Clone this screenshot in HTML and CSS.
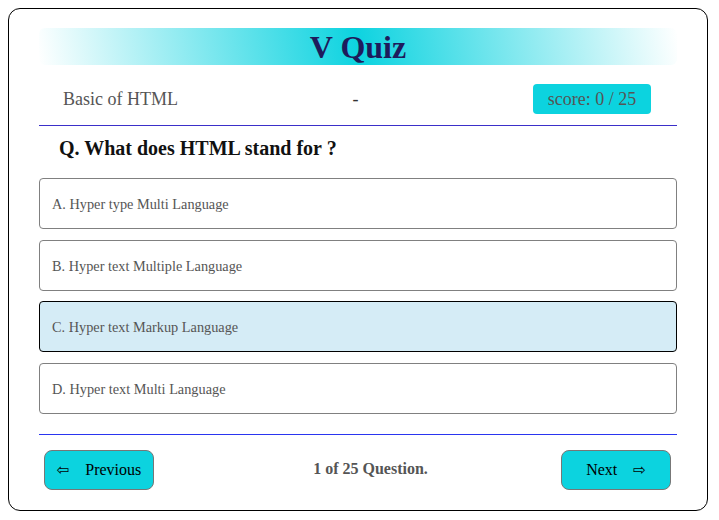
FILE: index.html
```html
<!DOCTYPE html>
<html>
<head>
<meta charset="utf-8">
<link rel="stylesheet" href="styles.css">
</head>
<body>
<div class="card">
  <h1 class="title">V Quiz</h1>
  <div class="meta">
    <span class="topic">Basic of HTML</span>
    <span class="dash">-</span>
    <span class="score">score: 0 / 25</span>
  </div>
  <div class="rule-top"></div>
  <h2 class="question">Q. What does HTML stand for ?</h2>
  <div class="options">
    <div class="option">A. Hyper type Multi Language</div>
    <div class="option">B. Hyper text Multiple Language</div>
    <div class="option selected">C. Hyper text Markup Language</div>
    <div class="option">D. Hyper text Multi Language</div>
  </div>
  <div class="rule-bottom"></div>
  <div class="footer">
    <button class="btn"><span class="arrow">⇦</span><span>Previous</span></button>
    <span class="count">1 of 25 Question.</span>
    <button class="btn"><span>Next</span><span class="arrow">⇨</span></button>
  </div>
</div>
</body>
</html>
```
FILE: styles.css
```css
html, body {
  margin: 0;
  padding: 0;
  background: #fff;
}
body {
  margin: 8px;
  font-family: "Liberation Serif", "Times New Roman", serif;
}
.card {
  box-sizing: border-box;
  width: 700px;
  height: 503px;
  border: 1px solid #000;
  border-radius: 12px;
  padding: 19px 30px 0 30px;
}
.title {
  margin: 0;
  height: 37px;
  line-height: 39px;
  text-align: center;
  font-size: 32px;
  font-weight: bold;
  color: #1e1b5c;
  border-radius: 6px;
  background: linear-gradient(80deg, #ffffff 0%, #0dd3e0 50%, #ffffff 100%);
}
.meta {
  margin-top: 19px;
  display: flex;
  justify-content: space-between;
  align-items: center;
  padding: 0 26px 0 24px;
  font-size: 18px;
  color: #555;
}
.dash {
  color: #333;
}
.score {
  box-sizing: border-box;
  height: 30px;
  width: 118px;
  line-height: 30px;
  text-align: center;
  background: #0cd3df;
  border-radius: 4px;
  color: #555;
}
.rule-top {
  margin-top: 11px;
  height: 1px;
  background: #3b2fc9;
}
.question {
  margin: 11px 0 0 0;
  padding-left: 20px;
  font-size: 20px;
  line-height: 22px;
  font-weight: bold;
  color: #111;
}
.options {
  margin-top: 19px;
  display: flex;
  flex-direction: column;
  gap: 10.7px;
}
.option {
  box-sizing: border-box;
  height: 51px;
  border: 1px solid #808080;
  border-radius: 4px;
  padding-left: 12px;
  display: flex;
  align-items: center;
  padding-top: 2px;
  font-size: 14.3px;
  color: #555;
}
.option.selected {
  background: #d5ecf6;
  border-color: #000;
}
.rule-bottom {
  margin-top: 20px;
  height: 1px;
  background: #2a35f0;
}
.footer {
  margin-top: 15px;
  display: flex;
  justify-content: space-between;
  align-items: center;
  padding: 0 6px 0 5px;
}
.btn {
  box-sizing: border-box;
  width: 110px;
  height: 40px;
  background: #0cd3df;
  border: 1px solid #777;
  border-radius: 8px;
  font-family: "Liberation Serif", "Times New Roman", serif;
  font-size: 16px;
  color: #000;
  display: flex;
  align-items: center;
  justify-content: center;
  gap: 16px;
  padding: 0;
}
.arrow {
  font-family: "DejaVu Sans", sans-serif;
  font-size: 15px;
}
.count {
  margin-left: 26px;
  margin-bottom: 3px;
  font-size: 16px;
  font-weight: bold;
  color: #555;
}
```
